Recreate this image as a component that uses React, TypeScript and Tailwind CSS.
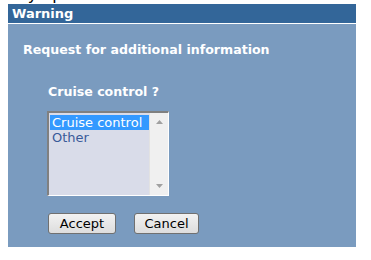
import React from "react";

export default function App() {
  const font = { fontFamily: '"DejaVu Sans", Verdana, sans-serif' };
  return (
    <div className="w-[371px] h-[260px] bg-white overflow-hidden" style={font}>
      <div className="h-[4px] overflow-hidden pl-[14px]">
        <div className="-mt-[14px] text-[16px] leading-[18px] text-black">My operation</div>
      </div>
      <div className="ml-[8px] w-[348px]">
        <div className="h-[20px] bg-[#336699] border-b border-white pl-[4px] text-white font-bold text-[13px] leading-[20px]">
          Warning
        </div>
        <div className="h-[223px] bg-[#7a9bbf] pt-[16px] pl-[15px]">
          <div className="text-white font-bold text-[12.6px] leading-[20px]">
            Request for additional information
          </div>
          <div className="mt-[22px] ml-[25px] text-white font-bold text-[12.6px] leading-[20px]">
            Cruise control ?
          </div>
          <div className="mt-[9px] ml-[24px] w-[122px] h-[85px] border-t-2 border-l-2 border-[#808080] border-r border-b border-r-white border-b-white flex">
            <div className="flex-1 bg-[#d9dce9] pt-[2px] pl-[1px]">
              <div className="bg-[#3399ff] text-white text-[13px] leading-[15px] pl-[2px]">Cruise control</div>
              <div className="text-[#3a5a99] text-[13px] leading-[15px] pl-[2px]">Other</div>
            </div>
            <div className="w-[19px] bg-[#f0f0f0] border-l border-[#e2e2e2] flex flex-col items-center justify-between pt-[7px] pb-[7px]">
              <svg width="7" height="4" viewBox="0 0 7 4"><path d="M0 4 L3.5 0 L7 4 Z" fill="#a0a0a0" /></svg>
              <svg width="7" height="4" viewBox="0 0 7 4"><path d="M0 0 L3.5 4 L7 0 Z" fill="#a0a0a0" /></svg>
            </div>
          </div>
          <div className="mt-[17px] ml-[25px] flex gap-[18px]">
            <button className="w-[68px] h-[21px] rounded-[3px] border border-[#707070] bg-gradient-to-b from-[#f2f2f2] to-[#dddddd] text-black text-[13px] leading-[19px]">
              Accept
            </button>
            <button className="w-[65px] h-[21px] rounded-[3px] border border-[#707070] bg-gradient-to-b from-[#f2f2f2] to-[#dddddd] text-black text-[13px] leading-[19px]">
              Cancel
            </button>
          </div>
        </div>
      </div>
    </div>
  );
}
